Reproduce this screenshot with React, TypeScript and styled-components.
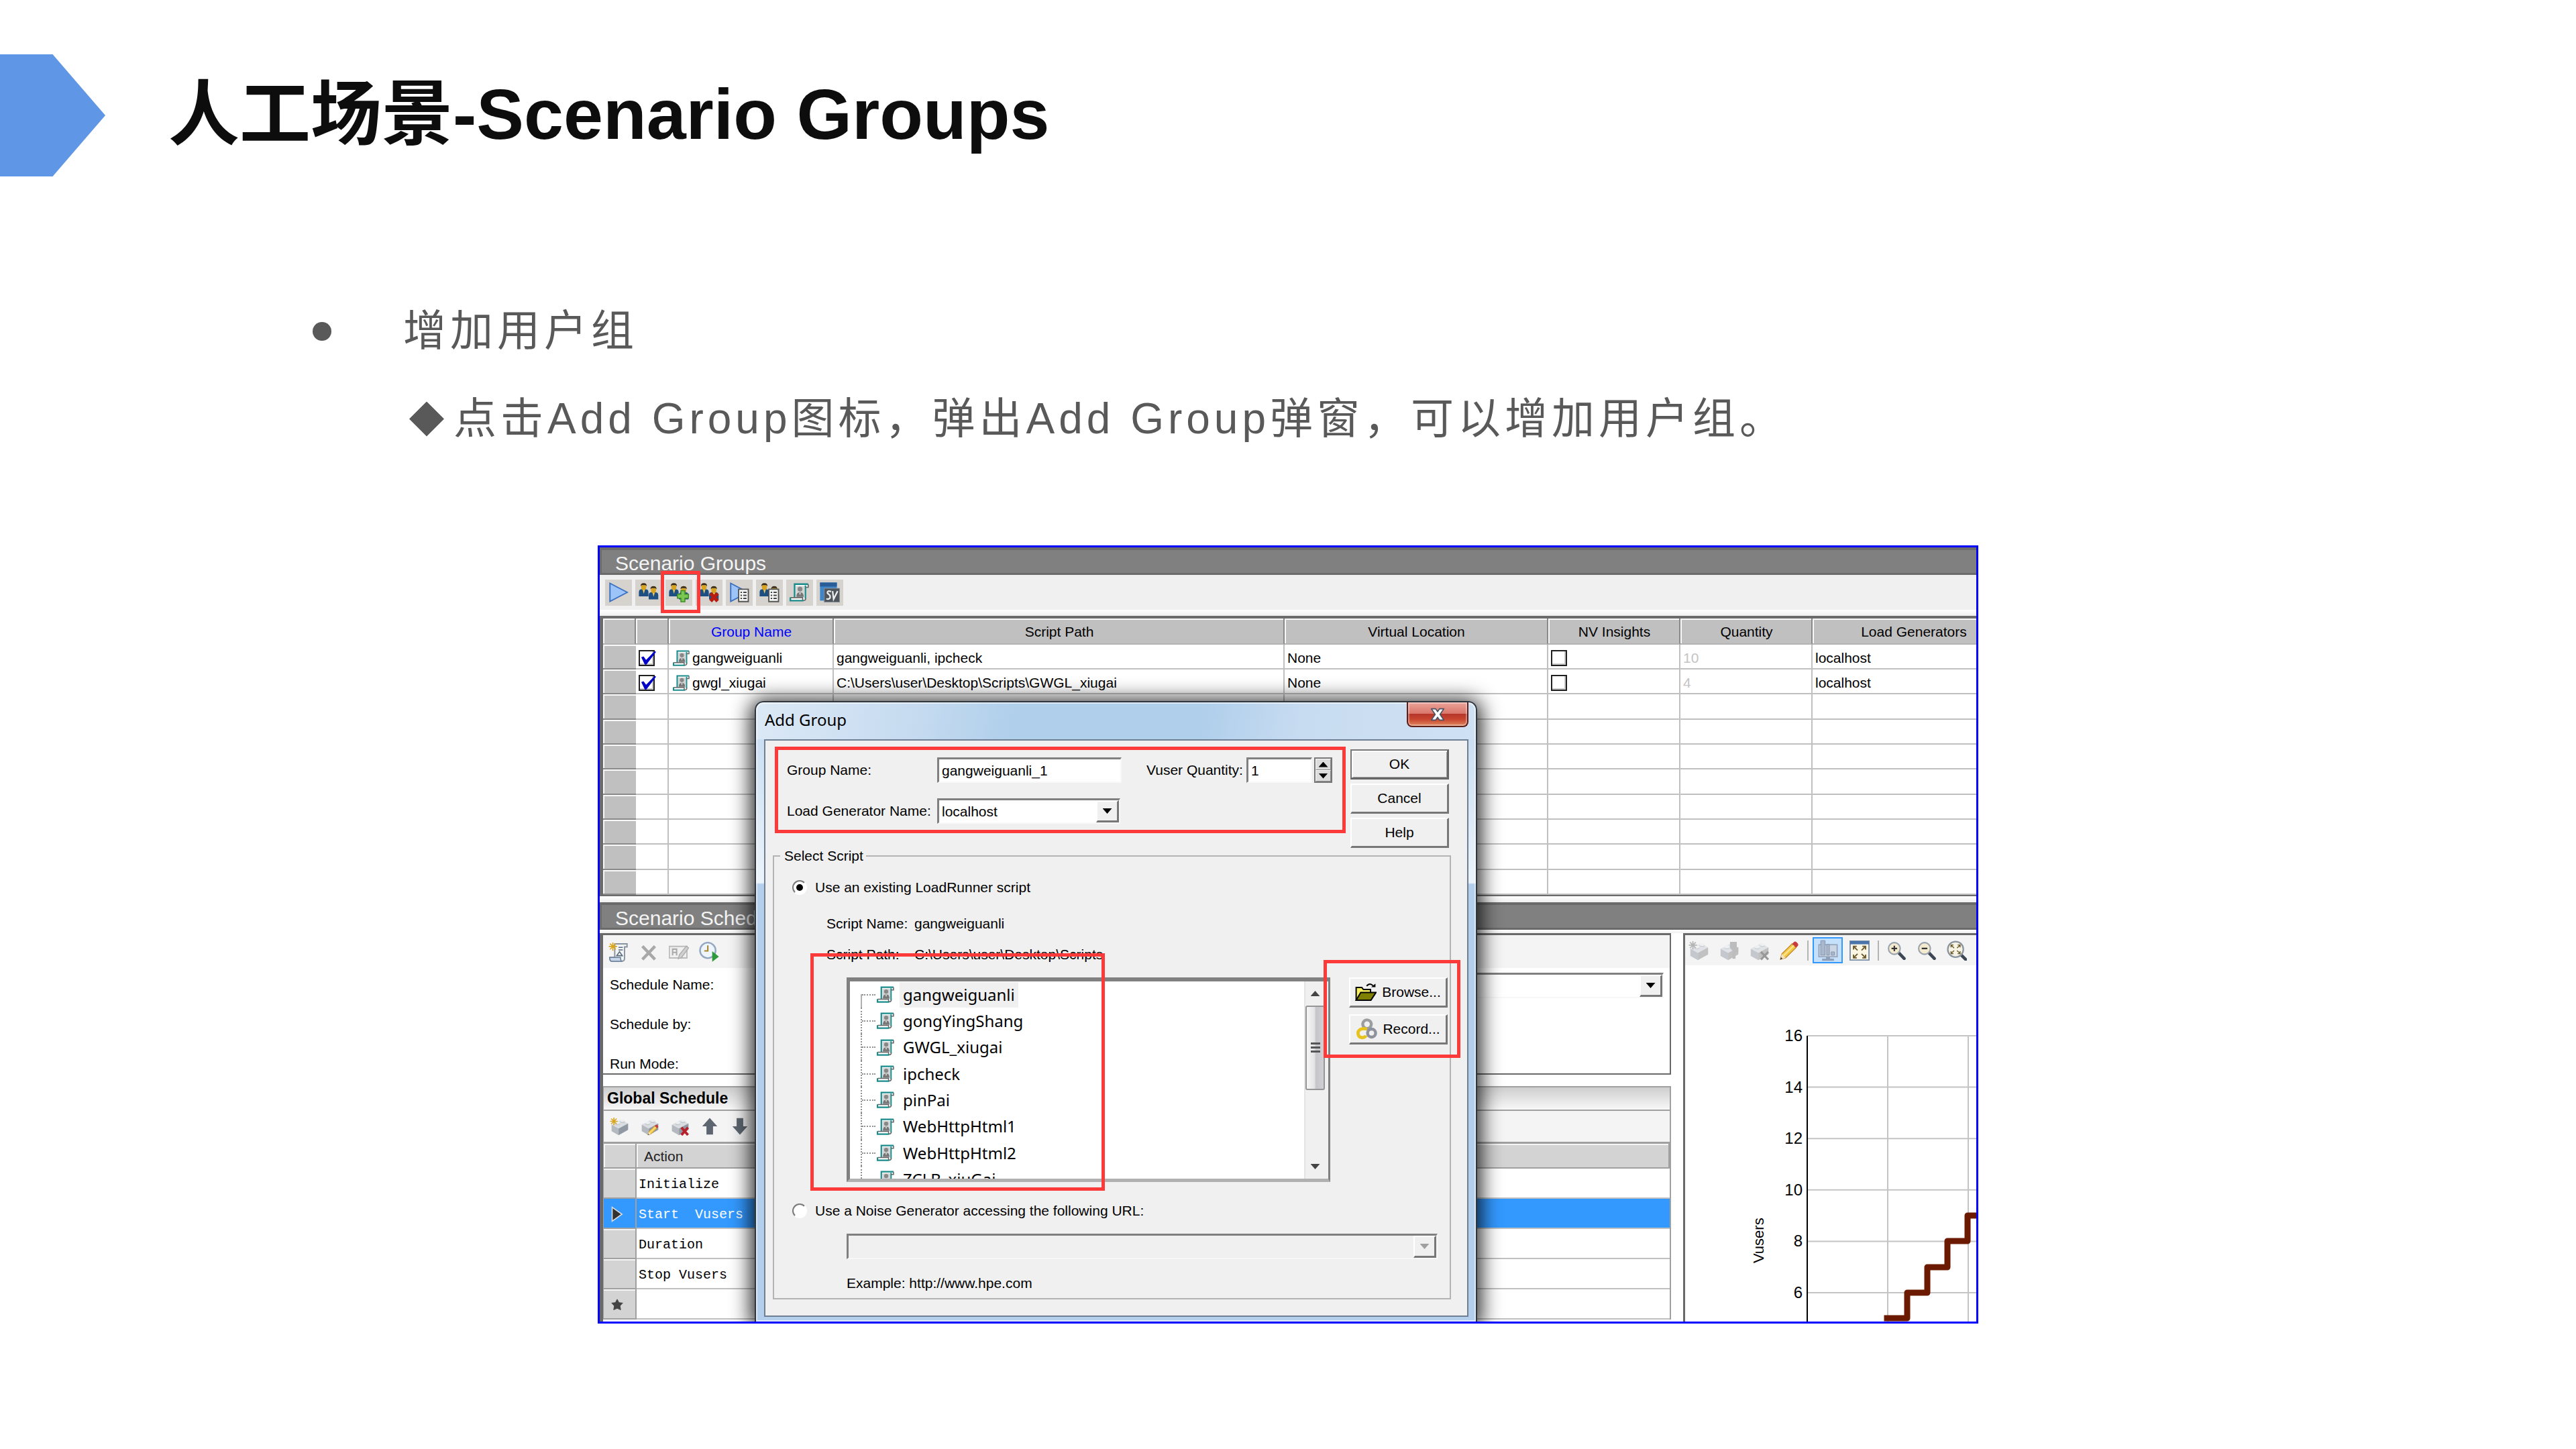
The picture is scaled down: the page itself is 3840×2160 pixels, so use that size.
import React from "react";
import styled, { createGlobalStyle, css } from "styled-components";

const UI = `"Liberation Sans", "Noto Sans CJK SC", sans-serif`;
const SEGOE = `"Noto Sans", "Noto Sans CJK SC", sans-serif`;
const MONO = `"Liberation Mono", "Noto Sans CJK SC", monospace`;

const Global = createGlobalStyle`
  *, *::before, *::after { box-sizing: border-box; }
  body { margin: 0; background: #fff; font-family: ${UI}; }
  button, input, select { font: inherit; color: inherit; margin: 0; }
`;

/* ---------- slide ---------- */

const Slide = styled.main`
  padding: 81px 0 120px;
`;

const Header = styled.header`
  display: flex;
  align-items: flex-start;
  gap: 94px;
`;

const Tag = styled.div`
  width: 157px;
  height: 182px;
  flex: none;
  background: #5f96e6;
  clip-path: polygon(0 0, 50% 0, 100% 50%, 50% 100%, 0 100%);
`;

const Title = styled.h1`
  margin: 0;
  font-size: 106px;
  line-height: 178px;
  font-weight: 700;
  color: #0d0d0d;
`;

const Points = styled.ul`
  list-style: none;
  margin: 165px 0 0;
  padding: 0 0 0 466px;
  font-size: 64px;
  line-height: 131px;
  letter-spacing: 6px;
  color: #595959;
`;

const Point = styled.li``;

const PointText = styled.div`
  display: flex;
  align-items: center;
  gap: 107px;
  &::before {
    content: "";
    width: 28px;
    height: 28px;
    border-radius: 50%;
    background: currentColor;
  }
`;

const SubPoints = styled.ul`
  list-style: none;
  margin: 0;
  padding: 0 0 0 144px;
`;

const SubPoint = styled.li`
  display: flex;
  align-items: center;
  gap: 14px;
  &::before {
    content: "";
    width: 52px;
    height: 52px;
    background: currentColor;
    clip-path: polygon(50% 0, 100% 50%, 50% 100%, 0 50%);
  }
`;

/* ---------- application window ---------- */

const Shot = styled.section`
  position: relative;
  margin: 123px 891px 0;
  border: 3px solid #0000ff;
  overflow: hidden;
  background: #f0f0f0;
  color: #000;
  font-size: 21px;
  line-height: 24px;
`;

const Bar = styled.h2`
  margin: 0;
  border: solid #6b6b6b;
  border-width: 4px 0 3px 3px;
  padding: 6px 0 0 20px;
  background: #808080;
  color: #f4f4f4;
  font-size: 30px;
  line-height: 28px;
  font-weight: 400;
`;

const ToolRow = styled.div<{ $h: number; $bg?: string; $pad?: string }>`
  display: flex;
  align-items: center;
  gap: 5px;
  height: ${(p) => p.$h}px;
  padding: ${(p) => p.$pad ?? "0"};
  background: ${(p) => p.$bg ?? "#f0f0f0"};
`;

const Tool = styled.button<{ $face?: string; $on?: boolean }>`
  display: grid;
  place-items: center;
  width: 40px;
  height: 39px;
  padding: 0;
  border: 0;
  background: ${(p) => p.$face ?? "transparent"};
  ${(p) =>
    p.$on &&
    css`
      width: 45px;
      background: #c4e0fb;
      border: 2px solid #3399ff;
    `}
`;

const Divider = styled.span`
  width: 2px;
  height: 30px;
  margin: 0 1px 0 2px;
  background: #b4b4b4;
`;

const Strip = styled.div<{ $h: number }>`
  height: ${(p) => p.$h}px;
  background: linear-gradient(#fff, #f0f0f0);
`;

const GridPane = styled.div`
  border: solid #6b6b6b;
  border-width: 4px 0 2px 5px;
  background: #fff;
  overflow: hidden;
`;

const GroupTable = styled.table`
  table-layout: fixed;
  width: 2105px;
  border-collapse: separate;
  border-spacing: 0;
`;

const GroupHead = styled.th<{ $blue?: boolean }>`
  height: 39px;
  padding: 2px 0 0 2px;
  font-weight: 400;
  color: ${(p) => (p.$blue ? "#0000ff" : "#000")};
  background: #c0c0c0;
  border-right: 2px solid #8a8a8a;
  border-bottom: 2px solid #b4b4b4;
  box-shadow: inset 2px 2px #f8f8f8;
`;

const GroupRow = styled.tr`
  height: 37px;
  &:nth-child(3n) {
    height: 38px;
  }
`;

const RowHead = styled.th`
  padding: 0;
  background: #c0c0c0;
  border-bottom: 2px solid #8a8a8a;
  box-shadow: inset 2px 2px #f8f8f8;
`;

const Cell = styled.td<{ $dim?: boolean; $noLine?: boolean }>`
  padding: 4px 0 0 4px;
  border-bottom: 2px solid #c0c0c0;
  border-right: ${(p) => (p.$noLine ? "0" : "2px solid #c0c0c0")};
  color: ${(p) => (p.$dim ? "#c4c4c4" : "#000")};
  white-space: pre;
`;

const NameCell = styled.span`
  display: flex;
  align-items: center;
  gap: 3px;
  padding-left: 2px;
`;

const Check = styled.input`
  appearance: none;
  display: block;
  width: 24px;
  height: 24px;
  background: #fff;
  border: 2px solid #202020;
  box-shadow: inset -2px -2px #c8c8c8;
  &:checked::after {
    content: "";
    display: block;
    width: 24px;
    height: 22px;
    background: #0000c8;
    clip-path: polygon(8% 42%, 22% 36%, 38% 60%, 92% 0, 100% 6%, 40% 92%, 30% 92%);
  }
`;

const Lower = styled.div`
  display: grid;
  grid-template-columns: minmax(0, 1fr) 437px;
  gap: 18px;
  background: #fff;
`;

const LeftColumn = styled.div`
  border-left: 5px solid #696969;
  padding-bottom: 3px;
`;

const SchedulePane = styled.div`
  border: solid #696969;
  border-width: 3px 2px 2px 0;
`;

const ScheduleForm = styled.div`
  display: grid;
  grid-template-columns: 220px minmax(0, 1fr);
  grid-template-rows: 37px 37px 30px;
  row-gap: 22px;
  padding: 7px 9px 2px 10px;
`;

const ScheduleLabel = styled.label`
  padding-top: 6px;
`;

const GlobalPane = styled.div`
  margin-top: 17px;
  border: solid #a0a0a0;
  border-width: 0 2px 0 1px;
`;

const GlobalTitle = styled.h3`
  margin: 0;
  padding-left: 5px;
  border: solid #a0a0a0;
  border-width: 2px 0;
  background: linear-gradient(#cecece, #f8f8f8);
  font-size: 23px;
  line-height: 33px;
  font-weight: 700;
`;

const ActionTable = styled.table`
  table-layout: fixed;
  width: 100%;
  border-collapse: separate;
  border-spacing: 0;
  border-top: 3px solid #a0a0a0;
`;

const ActionHead = styled.th`
  height: 37px;
  padding: 2px 0 0 11px;
  text-align: left;
  font-weight: 400;
  color: #222;
  background: #d3d3d3;
  border-right: 2px solid #a0a0a0;
  border-bottom: 2px solid #a0a0a0;
  box-shadow: inset 2px 2px #f4f4f4;
`;

const ActionRow = styled.tr<{ $on?: boolean }>`
  height: 45px;
  background: ${(p) => (p.$on ? "#3399ff" : "#fff")};
  color: ${(p) => (p.$on ? "#fff" : "#000")};
`;

const ActionMark = styled.th<{ $on?: boolean }>`
  padding: 2px 0 0 7px;
  background: ${(p) => (p.$on ? "#3399ff" : "#d3d3d3")};
  border-right: 2px solid #a0a0a0;
  border-bottom: 2px solid #a0a0a0;
  box-shadow: ${(p) => (p.$on ? "none" : "inset 0 2px #f4f4f4")};
  svg {
    display: block;
  }
`;

const ActionCell = styled.td`
  padding: 4px 0 0 3px;
  border-bottom: 2px solid #c0c0c0;
  font-family: ${MONO};
  font-size: 20px;
  white-space: pre;
`;

const ChartPane = styled.div`
  border: solid #696969;
  border-width: 3px 0 0 3px;
  background: #fff;
  overflow: hidden;
`;

const ChartSvg = styled.svg`
  display: block;
  font-family: ${UI};
`;

/* ---------- form controls ---------- */

const sunken = css`
  border: solid;
  border-width: 3px 2px 2px 3px;
  border-color: #808080 #f8f8f8 #f8f8f8 #808080;
`;

const raised = css`
  background: #f0f0f0;
  border: solid;
  border-width: 2px 3px 3px 2px;
  border-color: #fff #777 #777 #fff;
`;

const TextBox = styled.input<{ $w: number }>`
  ${sunken}
  width: ${(p) => p.$w}px;
  height: 38px;
  padding: 0 4px;
  background: #fff;
  border-radius: 0;
`;

const ComboWrap = styled.div<{ $w?: number; $off?: boolean }>`
  ${sunken}
  display: flex;
  width: ${(p) => (p.$w ? `${p.$w}px` : "auto")};
  height: 38px;
  background: ${(p) => (p.$off ? "#f0f0f0" : "#fff")};
`;

const ComboSelect = styled.select`
  appearance: none;
  flex: 1;
  min-width: 0;
  padding: 0 4px;
  border: 0;
  background: transparent;
  border-radius: 0;
`;

const ComboArrow = styled.span<{ $off?: boolean }>`
  ${raised}
  display: grid;
  place-items: center;
  width: 34px;
  flex: none;
  &::after {
    content: "";
    width: 14px;
    height: 8px;
    background: ${(p) => (p.$off ? "#a0a0a0" : "#000")};
    clip-path: polygon(0 0, 100% 0, 50% 100%);
  }
`;

function Combo(props: { id: string; value: string; width?: number; disabled?: boolean; label?: string }) {
  return (
    <ComboWrap $w={props.width} $off={props.disabled}>
      <ComboSelect id={props.id} disabled={props.disabled} aria-label={props.label}>
        <option>{props.value}</option>
      </ComboSelect>
      <ComboArrow $off={props.disabled} />
    </ComboWrap>
  );
}

/* ---------- dialog ---------- */

const Dialog = styled.div`
  position: absolute;
  left: 231px;
  top: 229px;
  bottom: 0;
  width: 1077px;
  display: flex;
  flex-direction: column;
  padding: 0 11px 7px 12px;
  border: 2px solid #30363e;
  border-bottom: 0;
  border-radius: 13px 13px 0 0;
  background:
    linear-gradient(100deg, #dce9f6 0, #c6dbf0 22%, #b0cfeb 36%, #b0cfeb 62%, #c8dcf1 76%, #cfe1f3 100%) 0 0 / 100% 55px no-repeat,
    linear-gradient(#cbdff2 55px, #ecf3fa 269px, #b3cfeb 271px);
  box-shadow: inset 0 0 0 2px rgba(255, 255, 255, 0.55), 0 4px 30px 6px rgba(0, 0, 0, 0.85);
`;

const DialogBar = styled.div`
  display: flex;
  justify-content: space-between;
  align-items: flex-start;
  height: 55px;
  padding-left: 1px;
`;

const DialogTitle = styled.h2`
  margin: 0;
  padding-top: 9px;
  font-family: ${SEGOE};
  font-size: 24px;
  line-height: 33px;
  font-weight: 400;
`;

const Close = styled.button`
  display: grid;
  place-items: center;
  width: 92px;
  height: 37px;
  padding: 0;
  border: 2px solid #5c1f1a;
  border-top: 0;
  border-radius: 0 0 8px 8px;
  background: linear-gradient(#eda39a 0, #d9766a 48%, #b5362a 50%, #c8452f 72%, #e0885f 100%);
  box-shadow: inset 0 0 0 2px rgba(255, 255, 255, 0.35);
`;

const DialogBody = styled.div`
  flex: 1;
  padding: 13px 24px 0 11px;
  border: 2px solid #6f7f93;
  background: #f0f0f0;
`;

const TopRow = styled.div`
  display: flex;
  justify-content: space-between;
  padding: 0 3px 0 21px;
`;

const Fields = styled.div`
  display: grid;
  grid-template-columns: 224px 312px 149px auto;
  grid-auto-rows: 38px;
  row-gap: 23px;
  align-items: center;
  align-content: start;
  padding-top: 12px;
`;

const QuantityBox = styled.div`
  display: flex;
  gap: 3px;
`;

const Spinner = styled.div`
  display: grid;
  width: 27px;
  height: 38px;
  border: 2px solid #777;
`;

const Spin = styled.button<{ $down?: boolean }>`
  display: grid;
  place-items: center;
  padding: 0;
  background: #dcdcdc;
  border: 1px solid;
  border-color: #fff #8a8a8a #8a8a8a #fff;
  &::after {
    content: "";
    width: 14px;
    height: 8px;
    background: #000;
    clip-path: ${(p) => (p.$down ? "polygon(0 0, 100% 0, 50% 100%)" : "polygon(50% 0, 100% 100%, 0 100%)")};
  }
`;

const ButtonStack = styled.div<{ $gap: number }>`
  display: flex;
  flex-direction: column;
  gap: ${(p) => p.$gap}px;
  width: 147px;
  flex: none;
`;

const Push = styled.button<{ $main?: boolean }>`
  ${raised}
  display: flex;
  align-items: center;
  justify-content: center;
  gap: 8px;
  height: 45px;
  padding: 0;
  border-radius: 0;
  ${(p) =>
    p.$main &&
    css`
      border-color: #777 #666 #666 #777;
      box-shadow: inset 2px 2px #fff, inset -1px -1px #a0a0a0;
    `}
`;

const Group = styled.fieldset`
  margin: 0;
  min-width: 0;
  padding: 23px 3px 10px 27px;
  border: 2px solid #b4b4b4;
`;

const Legend = styled.legend`
  margin-left: -18px;
  padding: 0 4px 0 6px;
`;

const RadioRow = styled.div`
  display: flex;
  align-items: center;
  gap: 12px;
  height: 24px;
`;

const Radio = styled.input`
  appearance: none;
  display: grid;
  place-items: center;
  width: 22px;
  height: 22px;
  border: 2px solid;
  border-color: #7a7a7a #fff #fff #7a7a7a;
  border-radius: 50%;
  background: #fff;
  &:checked::after {
    content: "";
    width: 10px;
    height: 10px;
    border-radius: 50%;
    background: #000;
  }
`;

const Facts = styled.dl`
  display: grid;
  grid-template-columns: 131px auto;
  row-gap: 22px;
  margin: 30px 0 22px 51px;
`;

const Fact = styled.dt``;

const FactValue = styled.dd`
  margin: 0;
`;

const ScriptPick = styled.div`
  display: flex;
  gap: 28px;
  padding-left: 81px;
`;

const TreeBox = styled.div`
  flex: 1;
  display: flex;
  justify-content: space-between;
  height: 305px;
  overflow: hidden;
  border: solid;
  border-width: 6px 3px 5px 5px;
  border-color: #808080 #808080 #b0b0b0 #808080;
  background: #fff;
`;

const Tree = styled.ul`
  list-style: none;
  margin: 0 0 0 16px;
  padding: 0;
  font-family: ${SEGOE};
  font-size: 24px;
`;

const Leaf = styled.li`
  display: flex;
  align-items: center;
  height: 39px;
  border-left: 2px dotted #909090;
  &:nth-child(3n) {
    height: 40px;
  }
  &:first-child {
    border-image: linear-gradient(transparent 50%, #b0b0b0 50%) 1;
  }
  &::before {
    content: "";
    width: 20px;
    margin-right: 2px;
    border-top: 2px dotted #909090;
  }
`;

const LeafName = styled.span<{ $on?: boolean }>`
  margin-left: 7px;
  padding: 0 5px;
  line-height: 38px;
  background: ${(p) => (p.$on ? "#f0f0f0" : "transparent")};
`;

const Scroll = styled.div`
  display: flex;
  flex-direction: column;
  align-items: center;
  width: 36px;
  padding-right: 5px;
  background: #f0f0f0;
  border-left: 2px solid #e4e4e4;
`;

const ScrollArrow = styled.span<{ $down?: boolean }>`
  width: 14px;
  height: 8px;
  margin: ${(p) => (p.$down ? "auto 0 14px" : "14px 0")};
  background: #444;
  clip-path: ${(p) => (p.$down ? "polygon(0 0, 100% 0, 50% 100%)" : "polygon(50% 0, 100% 100%, 0 100%)")};
`;

const Thumb = styled.span`
  display: grid;
  place-items: center;
  width: 29px;
  height: 126px;
  border: 2px solid #959595;
  border-radius: 3px;
  background: linear-gradient(90deg, #f6f6f6, #e4e4e6 45%, #c6c6ca 55%, #d0d0d4);
  &::after {
    content: "";
    width: 14px;
    height: 16px;
    background: linear-gradient(#555 0 3px, transparent 3px 6px, #555 6px 9px, transparent 9px 12px, #555 12px 15px, transparent 15px);
  }
`;

const UrlRow = styled.div`
  margin: 22px 15px 24px 81px;
`;

const Example = styled.div`
  margin-left: 81px;
`;

const Spacer = styled.div`
  height: 31px;
`;

const Marker = styled.div<{ $x: number; $y: number; $w: number; $h: number }>`
  position: absolute;
  left: ${(p) => p.$x}px;
  top: ${(p) => p.$y}px;
  width: ${(p) => p.$w}px;
  height: ${(p) => p.$h}px;
  border: 5px solid #fc3a3a;
  pointer-events: none;
`;

/* ---------- icons ---------- */

const Svg = ({ s = 30, children }: { s?: number; children: React.ReactNode }) => (
  <svg width={s} height={s} viewBox="0 0 16 16" aria-hidden="true">
    {children}
  </svg>
);

const Person = ({ x, y }: { x: number; y: number }) => (
  <g transform={`translate(${x} ${y})`}>
    <path d="M0 10.6V7.2Q0 5 2 4.8H5.4Q7.6 5 7.6 7.2V10.6Z" fill="#1d4f82" />
    <path d="M2.8 4.6H5L3.9 8.4Z" fill="#f0d060" />
    <path d="M1.8 1.6H5.8V3.6Q5.6 5.6 3.8 5.6T1.8 3.6Z" fill="#d9a520" />
    <path d="M1.4 2.6Q1.2 0 3.8 0T6.2 2.6L5.4 1.7H2.2Z" fill="#3a2c14" />
  </g>
);

const People = () => (
  <>
    <Person x={0.2} y={0.6} />
    <Person x={8} y={3} />
  </>
);

const Sheet = () => (
  <g>
    <path d="M7.5 5.5H15.2V15.3H7.5Z" fill="#f6f6f6" stroke="#555" strokeWidth="1" />
    <path d="M9 8H10.2M11.2 8H13.8M9 10.4H10.2M11.2 10.4H13.8M9 12.8H10.2M11.2 12.8H13.8" stroke="#444" strokeWidth="1" />
  </g>
);

const PlayShape = () => <path d="M1.2 0.8L15 8L1.2 15.2Z" fill="#9cc4f8" stroke="#3a6fc0" strokeWidth="1" />;

const ScriptShape = () => (
  <g>
    <path d="M4 1.5H14.5V4H12.5V12.5Q12.5 14.5 11 14.5H2Q1 14.5 1 12H4Z" fill="#fff" />
    <path d="M5 3H11.8V12H5Z" fill="#d4d4d4" />
    <path d="M4 12V1.5H14.8" fill="none" stroke="#1a8c8c" strokeWidth="1.3" />
    <path d="M12.6 2.5V13" fill="none" stroke="#1a8c8c" strokeWidth="1.2" />
    <path d="M14.8 1.6V4H12.8M0.8 12.2H10.4V14.4H11.6Q12.8 14.2 12.8 12.6" fill="none" stroke="#666" strokeWidth="0.9" />
    <path d="M0.6 12V14.6H11" fill="none" stroke="#1a8c8c" strokeWidth="1.3" />
    <circle cx="8.3" cy="5.4" r="1.9" fill="#888" />
    <path d="M5.4 11.6Q5.4 7.8 8.3 7.8T11.2 11.6Z" fill="#777" />
    <path d="M7.7 8.2H8.9L8.3 10.4Z" fill="#eee" />
  </g>
);

const Brick = ({ dim }: { dim?: boolean }) => (
  <g opacity={dim ? 0.75 : 1}>
    <path d="M1.5 6.5L9.5 2.4L15.6 5.5L7.5 9.8Z" fill="#d9dde2" />
    <path d="M1.5 6.5L7.5 9.8V15.6L1.5 12.2Z" fill="#b4b9c0" />
    <path d="M7.5 9.8L15.6 5.5V11L7.5 15.6Z" fill={dim ? "#b0b0b0" : "#8f98a3"} />
    <ellipse cx="6.6" cy="5.8" rx="2" ry="1.2" fill="#c3c8ce" />
    <ellipse cx="10.9" cy="4" rx="2" ry="1.2" fill="#c3c8ce" />
    <ellipse cx="6.6" cy="5" rx="2" ry="1.1" fill="#eceff2" />
    <ellipse cx="10.9" cy="3.2" rx="2" ry="1.1" fill="#eceff2" />
  </g>
);

const Spark = ({ c = "#d9a520" }: { c?: string }) => (
  <path d="M3.5 0.5V7M0.3 3.7H6.8M1.2 1.4L5.8 6M5.8 1.4L1.2 6" stroke={c} strokeWidth="0.9" />
);

const PencilShape = ({ k = 1 }: { k?: number }) => (
  <g transform={`translate(${16 - 16 * k} ${16 - 16 * k}) scale(${k})`}>
    <path d="M1 15L2.2 10.6L10.4 2.6L13.6 5.6L5.2 13.8Z" fill="#f4c842" stroke="#b8862a" strokeWidth="0.6" />
    <path d="M1 15L2.2 10.6L5.2 13.8Z" fill="#f3e2c0" />
    <path d="M1 15L1.5 13.2L2.8 14.5Z" fill="#333" />
    <path d="M10.4 2.6L12 1Q13 0.4 14 1.4L14.9 2.4Q15.6 3.4 15 4.2L13.6 5.6Z" fill="#c83c3c" />
    <path d="M3.6 12L11.8 4" stroke="#fbe69a" strokeWidth="1" />
  </g>
);

const Lens = ({ children }: { children: React.ReactNode }) => (
  <g>
    <path d="M9.8 9.8L14.6 14.8" stroke="#3c4654" strokeWidth="2.6" strokeLinecap="round" />
    <circle cx="6.2" cy="6.2" r="5" fill="#f3ead0" stroke="#9aa3ad" strokeWidth="1.2" />
    {children}
  </g>
);

const Corners = () => (
  <path
    d="M3.2 6V3.4H5.8M3.4 3.6L6.4 6.6M12.8 6V3.4H10.2M12.6 3.6L9.6 6.6M3.2 10V12.6H5.8M3.4 12.4L6.4 9.4M12.8 10V12.6H10.2M12.6 12.4L9.6 9.4"
    fill="none"
    stroke="#6a5a2c"
    strokeWidth="1"
  />
);

const icons: Record<string, React.ReactNode> = {
  play: <PlayShape />,
  people: <People />,
  peopleAdd: (
    <>
      <People />
      <path d="M9.6 6.6H12.8V9.4H15.6V12.6H12.8V15.4H9.6V12.6H6.8V9.4H9.6Z" fill="#7cc653" stroke="#3e8f26" strokeWidth="0.8" />
    </>
  ),
  peopleRemove: (
    <>
      <People />
      <path d="M9.2 8.8L14.8 15M14.8 8.8L9.2 15" stroke="#b81c10" strokeWidth="2.8" />
    </>
  ),
  playSheet: (
    <>
      <PlayShape />
      <Sheet />
    </>
  ),
  peopleSheet: (
    <>
      <People />
      <Sheet />
    </>
  ),
  script: <ScriptShape />,
  sv: (
    <>
      <path d="M0.2 0.2H13.6V14.6H0.2Z" fill="#3f86c8" />
      <path d="M0.2 0.2H13.6V3.4H0.2Z" fill="#2a5c98" />
      <path d="M3.6 4.8H15.8V15.8H3.6Z" fill="#4e555c" stroke="#8a9098" strokeWidth="0.5" />
      <path d="M9 7.4Q5.6 6.2 6.2 8.8Q8.8 10.2 8.2 12.4Q7 14 5.2 13M10.2 7L11 13.4L14.2 7" fill="none" stroke="#eee" strokeWidth="1.2" />
    </>
  ),
  newSchedule: (
    <>
      <path d="M5 1.6H14.8V4H12.8V13Q12.8 15.4 10.5 15.4H2.5Q1 15.4 1 12.4H5Z" fill="#f2f4f6" stroke="#8792a0" strokeWidth="1" />
      <path d="M1 12.4H9.6Q9.6 15.4 11 15.4H2.6Q1 15.4 1 12.4Z" fill="#c8d6e8" stroke="#6a7f9a" strokeWidth="0.8" />
      <path d="M8 4.4H11.4M8 6.4H11.4M6.6 11L8.8 7.8L11 11Z" stroke="#5b6a7c" strokeWidth="0.9" fill="none" />
      <Spark />
    </>
  ),
  cross: <path d="M3 3.5L13 14M13 3.5L3 14" stroke="#a8a8a8" strokeWidth="2.4" />,
  rename: (
    <>
      <path d="M0.4 3.6H14.4V12.8H0.4Z" fill="#f0f0f0" stroke="#bcbcbc" strokeWidth="1" />
      <path d="M3 10.8V5.8H6.2V10.8M3 8.4H6.2" fill="none" stroke="#aaa" strokeWidth="1.1" />
      <path d="M7.5 13.4L8.5 10L14 3.4L15.8 4.8L10.2 12.4Z" fill="#d0d0d0" stroke="#aaa" strokeWidth="0.7" />
    </>
  ),
  clock: (
    <>
      <circle cx="7" cy="6.8" r="6.2" fill="#eef5fc" stroke="#93a8c0" strokeWidth="1.3" />
      <path d="M7 2.8V7.2H4.2" fill="none" stroke="#a8862a" strokeWidth="1.1" />
      <path d="M10.5 7.5L15.8 11.7L10.5 15.9Z" fill="#2f9a3c" />
    </>
  ),
  brickNew: (
    <>
      <Brick />
      <Spark />
    </>
  ),
  brickEdit: (
    <>
      <Brick />
      <PencilShape k={0.62} />
    </>
  ),
  brickRemove: (
    <>
      <Brick />
      <path d="M9.6 9L15.2 15.4M15.2 9L9.6 15.4" stroke="#b8202c" strokeWidth="2.2" />
    </>
  ),
  up: <path d="M8 0.8L14.4 8H10.8V15H5.2V8H1.6Z" fill="#5d6670" />,
  down: <path d="M8 15.2L14.4 8H10.8V1H5.2V8H1.6Z" fill="#5d6670" />,
  brickNewOff: (
    <>
      <Brick dim />
      <Spark c="#b4b4b4" />
    </>
  ),
  brickSplitOff: (
    <>
      <Brick dim />
      <path d="M9 1H14.4V5.5H15.6V9.5H13.4V14.5H11V8L9 6Z" fill="#bdbdbd" />
    </>
  ),
  brickRemoveOff: (
    <>
      <Brick dim />
      <path d="M9.6 9L15.4 15.2M15.4 9L9.6 15.2" stroke="#999" strokeWidth="1.7" />
    </>
  ),
  pencil: <PencilShape />,
  monitor: (
    <>
      <path d="M1.2 3.6H14.8V12.6H1.2Z" fill="#ccd6e4" stroke="#8fa0b8" strokeWidth="0.8" />
      <path d="M2.6 11.4V0.6H5.8V11.4ZM7 11.4V3.4H9V11.4ZM10.4 11.4V9H12.8V11.4Z" fill="#a9b8cd" stroke="#8696ae" strokeWidth="0.5" />
      <path d="M6.5 12.6H9.5V14H12.4V15.6H3.6V14H6.5Z" fill="#8fa0b8" />
    </>
  ),
  fitWindow: (
    <>
      <path d="M0.5 0.5H15.5V15.5H0.5Z" fill="#fbf6e4" stroke="#7a8fa8" strokeWidth="1" />
      <path d="M0.5 0.5H15.5V3H0.5Z" fill="#4a74ac" />
      <g transform="translate(0 1.2)">
        <Corners />
      </g>
    </>
  ),
  zoomIn: (
    <Lens>
      <path d="M6.2 3.8V8.6M3.8 6.2H8.6" stroke="#333" strokeWidth="1.2" />
    </Lens>
  ),
  zoomOut: (
    <Lens>
      <path d="M3.8 6.2H8.6" stroke="#333" strokeWidth="1.3" />
    </Lens>
  ),
  zoomFit: (
    <>
      <path d="M11 11L15 15" stroke="#3c4654" strokeWidth="2.4" strokeLinecap="round" />
      <circle cx="7" cy="7" r="6.2" fill="#f6f2e4" stroke="#8a949e" strokeWidth="1.2" />
      <g transform="translate(1 1) scale(0.75)">
        <Corners />
      </g>
    </>
  ),
  folder: (
    <>
      <path d="M0.8 14V4.5H5L6.2 6H11.5V8" fill="#f8f060" stroke="#000" strokeWidth="1" />
      <path d="M0.8 14L4.2 8.2H15.6L11.8 14Z" fill="#808000" stroke="#000" strokeWidth="1" />
      <path d="M8.6 3.4Q11 0.8 13.4 3.2" fill="none" stroke="#000" strokeWidth="1" />
      <path d="M12 4.2H15.2V1.6Z" fill="#000" />
    </>
  ),
  record: (
    <>
      <circle cx="8.4" cy="4.4" r="3.2" fill="none" stroke="#9a9ea0" strokeWidth="2.2" />
      <circle cx="11.8" cy="11" r="3" fill="none" stroke="#8e929c" strokeWidth="2.2" />
      <path d="M8.4 8Q3.4 6.8 1.8 10Q1.2 14.2 5 14.4Q7 14.2 7.6 12.8" fill="none" stroke="#e6c21c" strokeWidth="2.4" />
    </>
  ),
  current: <path d="M3.4 1.6L12.4 8L3.4 14.4Z" fill="#333" stroke="#ddd" strokeWidth="1" />,
  star: <path d="M8 3L9.6 6L13 6.4L10.6 9L11.2 12.6L8 11.2L4.8 12.6L5.4 9L3 6.4L6.4 6Z" fill="#444" stroke="#444" strokeWidth="0.6" />,
  closeX: (
    <path d="M1.8 2.4H6L8 5.2L10 2.4H14.2L10.4 8L14.2 13.6H10L8 10.8L6 13.6H1.8L5.6 8Z" fill="#fff" stroke="#4a5266" strokeWidth="1.1" strokeLinejoin="round" />
  ),
};

const Icon = ({ name, s }: { name: string; s?: number }) => <Svg s={s}>{icons[name]}</Svg>;

/* ---------- data ---------- */

const groupTools = [
  ["play", "Start Scenario"],
  ["people", "Vusers"],
  ["peopleAdd", "Add Group"],
  ["peopleRemove", "Remove Group"],
  ["playSheet", "Run Details"],
  ["peopleSheet", "Group Details"],
  ["script", "View Script"],
  ["sv", "Service Virtualization"],
];

const columns = [49, 49, 246, 672, 393, 197, 197, 302];

const groups = [
  { name: "gangweiguanli", path: "gangweiguanli, ipcheck", location: "None", quantity: "10", host: "localhost" },
  { name: "gwgl_xiugai", path: "C:\\Users\\user\\Desktop\\Scripts\\GWGL_xiugai", location: "None", quantity: "4", host: "localhost" },
];

const scheduleTools = [
  ["newSchedule", "New Schedule"],
  ["cross", "Delete Schedule"],
  ["rename", "Rename Schedule"],
  ["clock", "Start Time"],
];

const globalTools = [
  ["brickNew", "Add Action"],
  ["brickEdit", "Edit Action"],
  ["brickRemove", "Delete Action"],
  ["up", "Move Up"],
  ["down", "Move Down"],
];

const actions = ["Initialize", "Start  Vusers", "Duration", "Stop Vusers", ""];

const scripts = ["gangweiguanli", "gongYingShang", "GWGL_xiugai", "ipcheck", "pinPai", "WebHttpHtml1", "WebHttpHtml2", "ZCLB_xiuGai"];

/* ---------- parts ---------- */

function GroupsTable() {
  return (
    <GroupTable>
      <colgroup>
        {columns.map((w, i) => (
          <col key={i} style={{ width: w }} />
        ))}
      </colgroup>
      <thead>
        <tr>
          <GroupHead aria-label="Row" />
          <GroupHead aria-label="Enabled" />
          <GroupHead $blue>Group Name</GroupHead>
          <GroupHead>Script Path</GroupHead>
          <GroupHead>Virtual Location</GroupHead>
          <GroupHead>NV Insights</GroupHead>
          <GroupHead>Quantity</GroupHead>
          <GroupHead>Load Generators</GroupHead>
        </tr>
      </thead>
      <tbody>
        {Array.from({ length: 10 }, (_, i) => {
          const g = groups[i];
          return (
            <GroupRow key={i}>
              <RowHead />
              <Cell>{g && <Check type="checkbox" defaultChecked aria-label={`Enable ${g.name}`} />}</Cell>
              <Cell>
                {g && (
                  <NameCell>
                    <Icon name="script" s={26} />
                    {g.name}
                  </NameCell>
                )}
              </Cell>
              <Cell>{g?.path}</Cell>
              <Cell>{g?.location}</Cell>
              <Cell>{g && <Check type="checkbox" aria-label={`NV Insights ${g.name}`} />}</Cell>
              <Cell $dim>{g?.quantity}</Cell>
              <Cell>{g?.host}</Cell>
            </GroupRow>
          );
        })}
      </tbody>
    </GroupTable>
  );
}

function Chart() {
  const top = 105;
  const step = 76.6;
  const left = 182;
  const labels = [16, 14, 12, 10, 8, 6];
  return (
    <ChartSvg width="434" height="531" viewBox="0 0 434 531" role="img" aria-label="Vusers over time">
      {labels.map((n, i) => (
        <g key={n}>
          <path d={`M${left} ${top + i * step}H434`} stroke="#c4c4c4" strokeWidth="2" />
          <text x="175" y={top + i * step + 8} fontSize="24" textAnchor="end">
            {n}
          </text>
        </g>
      ))}
      <path d={`M302 ${top}V531M422 ${top}V531`} stroke="#c4c4c4" strokeWidth="2" />
      <path d={`M${left} ${top}V531`} stroke="#000" strokeWidth="2" />
      <text fontSize="22" transform="translate(117 444) rotate(-90)">
        Vusers
      </text>
      <path d="M301 526H331V488H361V450H391V411H421V373H440" fill="none" stroke="#6b1a00" strokeWidth="9" strokeLinejoin="round" strokeLinecap="square" />
    </ChartSvg>
  );
}

function AddGroupDialog() {
  return (
    <Dialog role="dialog" aria-labelledby="dialog-title">
      <DialogBar>
        <DialogTitle id="dialog-title">Add Group</DialogTitle>
        <Close aria-label="Close">
          <Icon name="closeX" s={24} />
        </Close>
      </DialogBar>
      <DialogBody>
        <TopRow>
          <Fields>
            <label htmlFor="group-name">Group Name:</label>
            <TextBox id="group-name" $w={275} defaultValue="gangweiguanli_1" />
            <label htmlFor="quantity">Vuser Quantity:</label>
            <QuantityBox>
              <TextBox id="quantity" $w={98} defaultValue="1" />
              <Spinner>
                <Spin aria-label="Increase" />
                <Spin $down aria-label="Decrease" />
              </Spinner>
            </QuantityBox>
            <label htmlFor="generator">Load Generator Name:</label>
            <Combo id="generator" value="localhost" width={273} />
          </Fields>
          <ButtonStack $gap={6}>
            <Push $main>OK</Push>
            <Push>Cancel</Push>
            <Push>Help</Push>
          </ButtonStack>
        </TopRow>
        <Group>
          <Legend>Select Script</Legend>
          <RadioRow>
            <Radio type="radio" name="source" id="use-script" defaultChecked />
            <label htmlFor="use-script">Use an existing LoadRunner script</label>
          </RadioRow>
          <Facts>
            <Fact>Script Name:</Fact>
            <FactValue>gangweiguanli</FactValue>
            <Fact>Script Path:</Fact>
            <FactValue>C:\Users\user\Desktop\Scripts</FactValue>
          </Facts>
          <ScriptPick>
            <TreeBox>
              <Tree>
                {scripts.map((s, i) => (
                  <Leaf key={s}>
                    <Icon name="script" s={27} />
                    <LeafName $on={i === 0}>{s}</LeafName>
                  </Leaf>
                ))}
              </Tree>
              <Scroll>
                <ScrollArrow />
                <Thumb />
                <ScrollArrow $down />
              </Scroll>
            </TreeBox>
            <ButtonStack $gap={10}>
              <Push>
                <Icon name="folder" s={32} />
                Browse...
              </Push>
              <Push>
                <Icon name="record" s={32} />
                Record...
              </Push>
            </ButtonStack>
          </ScriptPick>
          <Spacer />
          <RadioRow>
            <Radio type="radio" name="source" id="use-noise" />
            <label htmlFor="use-noise">Use a Noise Generator accessing the following URL:</label>
          </RadioRow>
          <UrlRow>
            <Combo id="noise-url" value="" disabled label="Noise Generator URL" />
          </UrlRow>
          <Example>Example: http://www.hpe.com</Example>
        </Group>
      </DialogBody>
    </Dialog>
  );
}

export default function App() {
  return (
    <>
      <Global />
      <Slide>
        <Header>
          <Tag />
          <Title>人工场景-Scenario Groups</Title>
        </Header>
        <Points>
          <Point>
            <PointText>增加用户组</PointText>
            <SubPoints>
              <SubPoint>点击Add Group图标，弹出Add Group弹窗，可以增加用户组。</SubPoint>
            </SubPoints>
          </Point>
        </Points>
        <Shot>
          <Bar>Scenario Groups</Bar>
          <ToolRow $h={52} $pad="0 8px">
            {groupTools.map(([icon, label]) => (
              <Tool key={label} $face="#d6d3ce" aria-label={label}>
                <Icon name={icon} />
              </Tool>
            ))}
          </ToolRow>
          <Strip $h={9} />
          <GridPane>
            <GroupsTable />
          </GridPane>
          <Strip $h={9} />
          <Bar>Scenario Schedule</Bar>
          <Strip $h={5} />
          <Lower>
            <LeftColumn>
              <SchedulePane>
                <ToolRow $h={49} $bg="#f4f4f4" $pad="0 3px">
                  {scheduleTools.map(([icon, label]) => (
                    <Tool key={label} aria-label={label}>
                      <Icon name={icon} />
                    </Tool>
                  ))}
                </ToolRow>
                <ScheduleForm>
                  <ScheduleLabel htmlFor="schedule-name">Schedule Name:</ScheduleLabel>
                  <Combo id="schedule-name" value="" />
                  <ScheduleLabel as="span">Schedule by:</ScheduleLabel>
                  <span />
                  <ScheduleLabel as="span">Run Mode:</ScheduleLabel>
                </ScheduleForm>
              </SchedulePane>
              <GlobalPane>
                <GlobalTitle>Global Schedule</GlobalTitle>
                <ToolRow $h={46} $bg="#f4f4f4" $pad="0 3px">
                  {globalTools.map(([icon, label]) => (
                    <Tool key={label} aria-label={label}>
                      <Icon name={icon} s={28} />
                    </Tool>
                  ))}
                </ToolRow>
                <ActionTable>
                  <colgroup>
                    <col style={{ width: 49 }} />
                    <col />
                  </colgroup>
                  <thead>
                    <tr>
                      <ActionHead aria-label="Current" />
                      <ActionHead>Action</ActionHead>
                    </tr>
                  </thead>
                  <tbody>
                    {actions.map((a, i) => (
                      <ActionRow key={i} $on={i === 1}>
                        <ActionMark $on={i === 1}>
                          {i === 1 && <Icon name="current" s={26} />}
                          {i === 4 && <Icon name="star" s={26} />}
                        </ActionMark>
                        <ActionCell>{a}</ActionCell>
                      </ActionRow>
                    ))}
                  </tbody>
                </ActionTable>
              </GlobalPane>
            </LeftColumn>
            <ChartPane>
              <ToolRow $h={45} $bg="#f4f4f4">
                <Tool aria-label="New Action" disabled>
                  <Icon name="brickNewOff" />
                </Tool>
                <Tool aria-label="Split Action" disabled>
                  <Icon name="brickSplitOff" />
                </Tool>
                <Tool aria-label="Remove Action" disabled>
                  <Icon name="brickRemoveOff" />
                </Tool>
                <Tool aria-label="Edit">
                  <Icon name="pencil" />
                </Tool>
                <Divider />
                <Tool $on aria-label="Show Graph">
                  <Icon name="monitor" s={32} />
                </Tool>
                <Tool aria-label="Full View">
                  <Icon name="fitWindow" />
                </Tool>
                <Divider />
                <Tool aria-label="Zoom In">
                  <Icon name="zoomIn" s={28} />
                </Tool>
                <Tool aria-label="Zoom Out">
                  <Icon name="zoomOut" s={28} />
                </Tool>
                <Tool aria-label="Zoom Reset">
                  <Icon name="zoomFit" />
                </Tool>
              </ToolRow>
              <Chart />
            </ChartPane>
          </Lower>
          <AddGroupDialog />
          <Marker $x={91} $y={35} $w={59} $h={63} />
          <Marker $x={261} $y={297} $w={851} $h={129} />
          <Marker $x={314} $y={605} $w={439} $h={354} />
          <Marker $x={1079} $y={615} $w={204} $h={146} />
        </Shot>
      </Slide>
    </>
  );
}
